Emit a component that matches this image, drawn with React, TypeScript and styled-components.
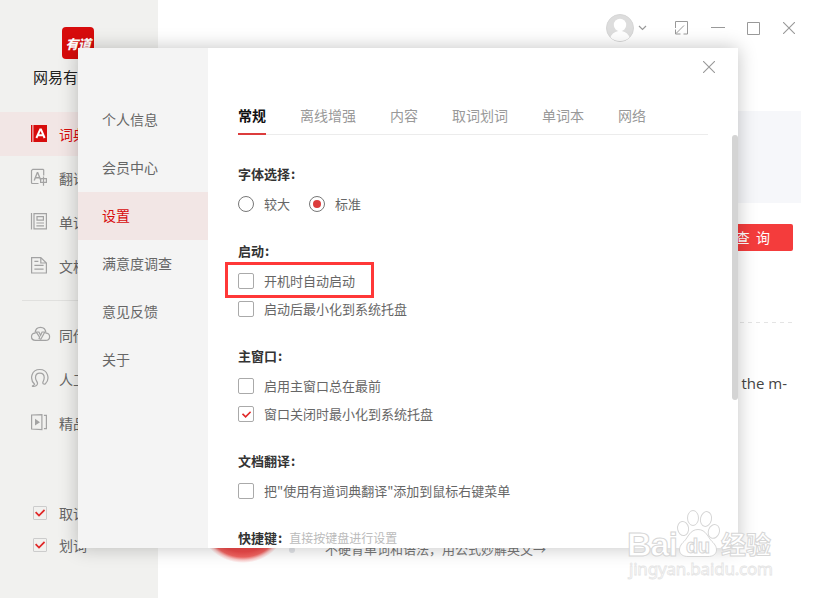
import React from "react";
import styled, { createGlobalStyle, css } from "styled-components";

const GlobalStyle = createGlobalStyle`
  * { box-sizing: border-box; }
  body {
    margin: 0;
    overflow: hidden;
    font-family: "Noto Sans CJK SC", "Noto Sans", sans-serif;
    font-size: 14px;
    color: #666;
  }
`;

const Window = styled.div`
  position: relative;
  display: flex;
  width: 818px;
  height: 598px;
  overflow: hidden;
  background: #fff;
`;

/* ---------- main window sidebar ---------- */

const Sidebar = styled.aside`
  display: flex;
  flex-direction: column;
  flex: none;
  width: 158px;
  background: #f1f1ef;
`;

const Brand = styled.div`
  display: flex;
  flex-direction: column;
  align-items: center;
  height: 112px;
  padding: 27px 2px 0 0;
`;

const Logo = styled.div`
  display: flex;
  align-items: center;
  justify-content: center;
  width: 32px;
  height: 32px;
  border-radius: 4px;
  background: #d70c0c;
  color: #fff;
  font-size: 13px;
  font-weight: 900;
  font-style: italic;
  letter-spacing: -0.6px;
`;

const BrandName = styled.div`
  margin-top: 7px;
  font-size: 15px;
  line-height: 22px;
  color: #222;
`;

const SideItem = styled.div<{ $active?: boolean }>`
  display: flex;
  align-items: center;
  height: 44px;
  padding-left: 30px;
  line-height: 20px;
  color: ${(p) => (p.$active ? "#d70c0c" : "#666")};
  background: ${(p) => (p.$active ? "#f2e6e5" : "transparent")};
  white-space: nowrap;
`;

const SideIcon = styled.span`
  display: flex;
  flex: none;
  width: 29px;

  svg { display: block; margin-top: -2px; }
`;

const SideDivider = styled.div`
  height: 1px;
  margin: 12px 22px;
  background: #e0e0de;
`;

const SideChecks = styled.div`
  margin-top: 52px;
`;

const SideCheck = styled.div`
  display: flex;
  align-items: center;
  height: 32px;
  padding-left: 33px;
  gap: 12px;
`;

const SmallBox = styled.span`
  display: flex;
  align-items: center;
  justify-content: center;
  width: 14px;
  height: 14px;
  border: 1px solid #ccc;
  border-radius: 1px;
`;

/* ---------- main window content ---------- */

const Main = styled.main`
  display: flex;
  flex: 1;
  flex-direction: column;
  align-items: flex-end;
  padding-right: 17px;
`;

const TitleBar = styled.div`
  display: flex;
  align-items: center;
  height: 55px;
  margin-right: 6px;
`;

const UserMenu = styled.div`
  display: flex;
  align-items: center;
  gap: 4px;
  margin-right: 27px;
`;

const WindowButtons = styled.div`
  display: flex;
  align-items: center;
  gap: 21px;

  svg { display: block; }
  svg:nth-child(3) { margin: 1px 1px 0 0; }
`;

const SearchPanel = styled.div`
  width: 600px;
  height: 92px;
  margin-top: 56px;
  background: #f6f7fa;
`;

const QueryButton = styled.div`
  display: flex;
  align-items: center;
  justify-content: flex-end;
  width: 80px;
  height: 27px;
  margin: 21px 8px 0 0;
  padding: 0 23px 1px 0;
  border-radius: 2px;
  background: #f43c3c;
  color: #fff;
  word-spacing: 3px;
  white-space: pre;
`;

const Dashes = styled.div`
  width: 560px;
  height: 1px;
  margin: 71px 9px 0 0;
  background: repeating-linear-gradient(to left, #e4e4e4 0 4px, transparent 4px 8px);
`;

const Sentence = styled.div`
  margin: 49px 14px 0 0;
  font-family: "Open Sans", "Noto Sans", sans-serif;
  font-size: 15px;
  line-height: 22px;
  color: #444;
`;

const Promo = styled.div`
  display: flex;
  align-items: center;
  align-self: flex-start;
  margin-top: 77px;
  padding-left: 39px;
  font-size: 13px;
  color: #777;
  white-space: nowrap;
`;

const PromoBall = styled.div`
  width: 92px;
  height: 92px;
  border-radius: 50%;
  background: radial-gradient(circle, #ee4a4a 0 35px, #f26461 40px, rgba(244, 120, 118, 0.4) 43px, transparent 46px);
`;

const PromoDot = styled.span`
  width: 6px;
  height: 6px;
  margin: 66px 30px 0 0;
  border-radius: 50%;
  background: #e2e4e8;
`;

const PromoText = styled.span`
  margin-top: 62px;
`;

/* ---------- settings dialog ---------- */

const Dialog = styled.section`
  position: absolute;
  left: 78px;
  top: 48px;
  display: flex;
  width: 660px;
  height: 500px;
  background: #fff;
  box-shadow: 0 0 18px rgba(0, 0, 0, 0.24);
`;

const DialogNav = styled.nav`
  flex: none;
  width: 130px;
  padding-top: 48px;
  background: #f4f4f4;
`;

const DialogNavItem = styled.div<{ $active?: boolean }>`
  height: 48px;
  padding-left: 24px;
  line-height: 47px;
  color: ${(p) => (p.$active ? "#d70c0c" : "#666")};
  background: ${(p) => (p.$active ? "#f2e6e5" : "transparent")};
`;

const DialogBody = styled.div`
  display: flex;
  flex: 1;
  flex-direction: column;
  padding-left: 30px;
  overflow: hidden;
`;

const DialogHead = styled.div`
  display: flex;
  flex: none;
  justify-content: flex-end;
  height: 52px;
  padding: 13px 23px 0 0;
`;

const Tabs = styled.div`
  display: flex;
  flex: none;
  gap: 34px;
  height: 35px;
  margin-right: 30px;
  border-bottom: 1px solid #ececec;
`;

const Tab = styled.div<{ $active?: boolean }>`
  height: 35px;
  line-height: 30px;
  color: #999;
  ${(p) =>
    p.$active &&
    css`
      color: #111;
      font-weight: 700;
      border-bottom: 2px solid #dc3c3c;
    `}
`;

const ScrollArea = styled.div`
  display: flex;
  flex: 1;
  justify-content: space-between;
  min-height: 0;
`;

const Sections = styled.div`
  padding-top: 23px;
`;

const ScrollThumb = styled.div`
  width: 6px;
  height: 265px;
  border-radius: 3px;
  background: #d4d4d4;
`;

const Section = styled.div`
  margin-bottom: 17px;
  font-size: 13px;
`;

const SectionTitle = styled.div`
  height: 32px;
  line-height: 32px;
  font-size: 13px;
  font-weight: 700;
  color: #333;
  white-space: nowrap;
`;

const Colon = styled.span`
  margin-left: 1px;
`;

const Hint = styled.span`
  margin-left: 7px;
  font-size: 12px;
  font-weight: 400;
  color: #bbb;
`;

const OptionRow = styled.div`
  display: flex;
  gap: 19px;
`;

const Option = styled.label`
  position: relative;
  display: flex;
  align-items: center;
  gap: 10px;
  height: 28px;
  line-height: 28px;
  white-space: nowrap;
`;

const Mark = styled.span<{ $round?: boolean }>`
  display: flex;
  flex: none;
  align-items: center;
  justify-content: center;
  width: 16px;
  height: 16px;
  border: 1px solid ${(p) => (p.$round ? "#777" : "#aaa")};
  border-radius: ${(p) => (p.$round ? "50%" : "2px")};
`;

const RadioDot = styled.span`
  width: 8px;
  height: 8px;
  border-radius: 50%;
  background: #dc3c3c;
`;

const HighlightFrame = styled.span`
  position: absolute;
  left: -13px;
  top: -5px;
  width: 149px;
  height: 36px;
  border: 3px solid #ff3838;
`;

const Watermark = styled.svg`
  position: absolute;
  left: 620px;
  top: 504px;
`;

/* ---------- icons ---------- */

const Tick = ({ size = 10 }: { size?: number }) => (
  <svg width={size} height={size} viewBox="0 0 10 10" fill="none" stroke="#e02828" strokeWidth="1.8">
    <path d="M0.6 4.2 4 7.6 9.6 2" />
  </svg>
);

const CloseIcon = () => (
  <svg width="12" height="12" viewBox="0 0 12 12" fill="none" stroke="#999" strokeWidth="1.1">
    <path d="M0 0 12 12M12 0 0 12" />
  </svg>
);

const Line = ({ children, width = 20 }: { children: React.ReactNode; width?: number }) => (
  <svg width={width} height="20" viewBox={`0 0 ${width} 20`} fill="none" stroke="#a3a3a3" strokeWidth="1.2">
    {children}
  </svg>
);

const DictIcon = () => (
  <svg width="20" height="20" viewBox="0 0 20 20">
    <path fill="#d70c0c" d="M1 2h1.4v17H1zM3.4 2H17v17H3.4z" />
    <path fill="none" stroke="#fff" strokeWidth="2" d="M6.4 15 10.2 6.4h.8L14.6 15M7.8 12.2h5.6" />
  </svg>
);

const TranslateIcon = () => (
  <Line>
    <path d="M8.5 16.5h-6a1 1 0 0 1-1-1v-12l1.3-1.2H13l.7.8v5.4" />
    <path d="M4.2 13.4 7.3 5.6h.4l3.2 7.8M5.2 10.8h4.6" strokeWidth="1.4" />
    <path d="M10.6 11.6h5.8v3.8h-5.8zM13.5 9.6v9.2" />
  </Line>
);

const WordbookIcon = () => (
  <Line>
    <path d="M1.5 2v16.5M4 2.6h12.4v15.3H4zM7 5.6h6.4v3.6H7zM6.4 12h7.6M6.4 14.8h7.6" />
  </Line>
);

const DocIcon = () => (
  <Line>
    <path d="M1.6 2.6h9.2l5.6 5.4v10H1.6zM10.8 2.6V8h5.6M4.4 6.4h4M4.4 10.4h9.2M4.4 14.2h9.2" />
  </Line>
);

const CloudIcon = () => (
  <Line width={21}>
    <path d="M5.5 16.4C3 16.4 1.5 14.7 1.5 12.7c0-2 1.5-3.5 3.5-3.6C5.3 5.6 7.7 3.4 10.5 3.4s5.200 2.200 5.500 5.700c2 .1 3.600 1.600 3.600 3.600s-1.600 3.700-4.100 3.700z" />
    <path d="M6.200 8h2.700l1.700 3.300L12.100 8h2.700l-4 7.200-1.700-.8.500-1.300z" />
  </Line>
);

const HeadsetIcon = () => (
  <Line>
    <path d="M4.600 16.300C-.8 11.200 1.400 1.500 9.800 1.500c8.200 0 10.400 9.600 5.600 14.200-1 .9-2.700.4-2.600-1.100.2-1.200 1.400-2.200 1.400-5 0-2.500-1.500-4.400-4.400-4.400S5.500 7.100 5.500 9.700c0 2.400 1.800 4.100 2 5.400.3 2.400-2.400 3.700-5.500 3.100 1.100-.3 2-.9 2.600-1.900z" />
  </Line>
);

const CourseIcon = () => (
  <Line>
    <path d="M1.6 3 11.9 2.6v15L1.6 17zM13.9 3.4h2.5v13.2h-2.5" />
    <path fill="#a3a3a3" stroke="none" d="M5 6.800 10 10.200 5 13.600z" />
  </Line>
);

const Avatar = () => (
  <svg width="28" height="28" viewBox="0 0 28 28">
    <circle cx="14" cy="14" r="13.5" fill="#ddd" stroke="#d6d6d6" />
    <circle cx="14" cy="11" r="6.2" fill="#fff" />
    <path fill="#fff" d="M4.5 23.2C6 19.5 9.5 17 14 17s8 2.5 9.5 6.2A13 13 0 0 1 14 27a13 13 0 0 1-9.5-3.800z" />
  </svg>
);

interface OptionData {
  label: string;
  framed?: boolean;
  checked?: boolean;
}

const sideItems = [
  { label: "词典", icon: <DictIcon />, active: true },
  { label: "翻译", icon: <TranslateIcon /> },
  { label: "单词本", icon: <WordbookIcon /> },
  { label: "文档翻译", icon: <DocIcon /> },
];

const serviceItems = [
  { label: "同传", icon: <CloudIcon /> },
  { label: "人工翻译", icon: <HeadsetIcon /> },
  { label: "精品课", icon: <CourseIcon /> },
];

const navItems = ["个人信息", "会员中心", "设置", "满意度调查", "意见反馈", "关于"];
const tabs = ["常规", "离线增强", "内容", "取词划词", "单词本", "网络"];

const groups: { title: string; options: OptionData[] }[] = [
  {
    title: "启动",
    options: [{ label: "开机时自动启动", framed: true }, { label: "启动后最小化到系统托盘" }],
  },
  {
    title: "主窗口",
    options: [{ label: "启用主窗口总在最前" }, { label: "窗口关闭时最小化到系统托盘", checked: true }],
  },
  { title: "文档翻译", options: [{ label: '把"使用有道词典翻译"添加到鼠标右键菜单' }] },
];

export default function App() {
  return (
    <>
      <GlobalStyle />
      <Window>
        <Sidebar>
          <Brand>
            <Logo>有道</Logo>
            <BrandName>网易有道词典</BrandName>
          </Brand>
          {sideItems.map((i) => (
            <SideItem key={i.label} $active={i.active}>
              <SideIcon>{i.icon}</SideIcon>
              {i.label}
            </SideItem>
          ))}
          <SideDivider />
          {serviceItems.map((i) => (
            <SideItem key={i.label}>
              <SideIcon>{i.icon}</SideIcon>
              {i.label}
            </SideItem>
          ))}
          <SideChecks>
            {["取词", "划词"].map((t) => (
              <SideCheck key={t}>
                <SmallBox>
                  <Tick />
                </SmallBox>
                {t}
              </SideCheck>
            ))}
          </SideChecks>
        </Sidebar>

        <Main>
          <TitleBar>
            <UserMenu>
              <Avatar />
              <svg width="9" height="6" viewBox="0 0 9 6" fill="none" stroke="#999" strokeWidth="1.2">
                <path d="M1 1l3.5 3.5L8 1" />
              </svg>
            </UserMenu>
            <WindowButtons>
              <svg width="16" height="14" viewBox="0 0 16 14" fill="none" stroke="#999">
                <path d="M1.5 7V.5h12V13H9.500M1.500 8.500V13h5M2 12.500 10 4.500" />
              </svg>
              <svg width="14" height="2" viewBox="0 0 14 2">
                <path stroke="#999" d="M0 .5h14" />
              </svg>
              <svg width="15" height="13" viewBox="0 0 15 13" fill="none" stroke="#999">
                <path d="M1.5.5h12v12h-12z" />
              </svg>
              <CloseIcon />
            </WindowButtons>
          </TitleBar>
          <SearchPanel />
          <QueryButton>查 询</QueryButton>
          <Dashes />
          <Sentence>the m-</Sentence>
          <Promo>
            <PromoBall />
            <PromoDot />
            <PromoText>不硬背单词和语法，用公式妙解英文→</PromoText>
          </Promo>
        </Main>

        <Dialog>
          <DialogNav>
            {navItems.map((t) => (
              <DialogNavItem key={t} $active={t === "设置"}>
                {t}
              </DialogNavItem>
            ))}
          </DialogNav>
          <DialogBody>
            <DialogHead>
              <CloseIcon />
            </DialogHead>
            <Tabs>
              {tabs.map((t, i) => (
                <Tab key={t} $active={i === 0}>
                  {t}
                </Tab>
              ))}
            </Tabs>
            <ScrollArea>
              <Sections>
                <Section>
                  <SectionTitle>
                    字体选择<Colon>:</Colon>
                  </SectionTitle>
                  <OptionRow>
                    <Option>
                      <Mark $round />
                      较大
                    </Option>
                    <Option>
                      <Mark $round>
                        <RadioDot />
                      </Mark>
                      标准
                    </Option>
                  </OptionRow>
                </Section>
                {groups.map((g) => (
                  <Section key={g.title}>
                    <SectionTitle>
                      {g.title}
                      <Colon>:</Colon>
                    </SectionTitle>
                    {g.options.map((o) => (
                      <Option key={o.label}>
                        <Mark>{o.checked && <Tick size={9} />}</Mark>
                        {o.label}
                        {o.framed && <HighlightFrame />}
                      </Option>
                    ))}
                  </Section>
                ))}
                <SectionTitle>
                  快捷键<Colon>:</Colon>
                  <Hint>直接按键盘进行设置</Hint>
                </SectionTitle>
              </Sections>
              <ScrollThumb />
            </ScrollArea>
          </DialogBody>
        </Dialog>

        <Watermark width="170" height="84" viewBox="0 0 170 84" fill="#fff" stroke="#d6d6d6" strokeWidth="1">
          <ellipse cx="63" cy="24.5" rx="5.5" ry="7" transform="rotate(-10 63 24)" />
          <ellipse cx="73" cy="14" rx="5.5" ry="7.5" />
          <ellipse cx="86" cy="15" rx="5.5" ry="7.5" transform="rotate(12 86 15)" />
          <ellipse cx="94" cy="27.5" rx="5.5" ry="7" transform="rotate(20 94 27)" />
          <path d="M78 25.500c8 0 10 8 14 12 7 6 6 15-4 15H68c-10 0-11-9-4-15 4-4 6-12 14-12z" />
          <text x="7" y="52" fontFamily="Liberation Sans" fontWeight="700" fontSize="34" textLength="51">Bai</text>
          <text x="66" y="48.5" fontFamily="Liberation Sans" fontWeight="700" fontSize="20" textLength="24">du</text>
          <text x="101" y="50" fontWeight="700" fontSize="25" textLength="50">经验</text>
          <text x="9" y="71" fontFamily="Noto Sans" fontSize="17" textLength="144" stroke="#e4e4e4" strokeWidth="0.8">jingyan.baidu.com</text>
        </Watermark>
      </Window>
    </>
  );
}
